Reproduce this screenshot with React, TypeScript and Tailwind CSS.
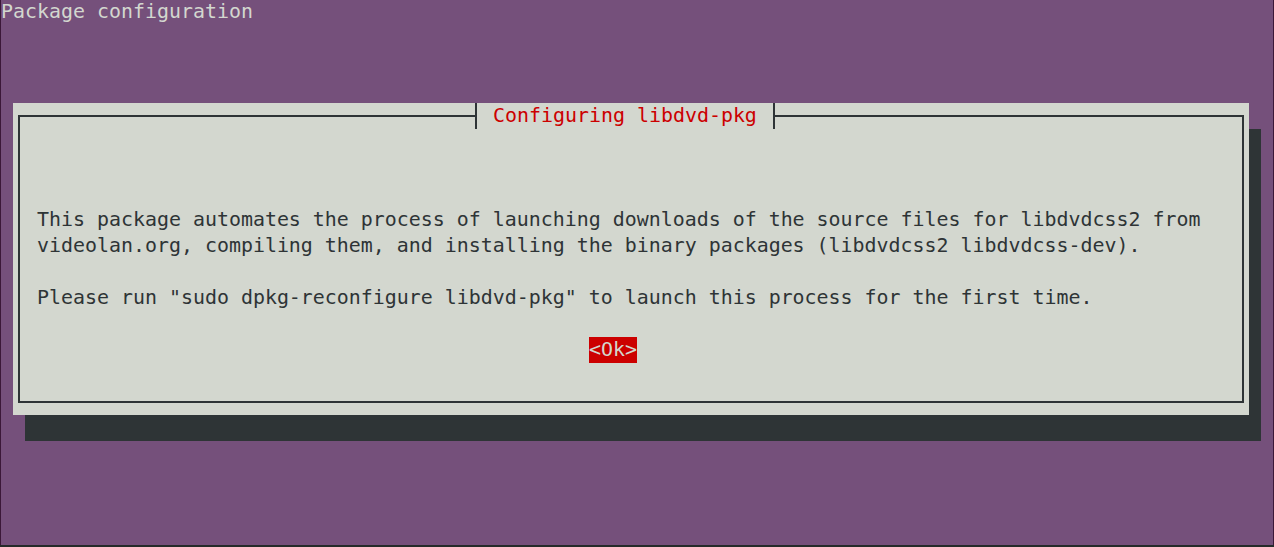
import React from "react";

const mono = { fontFamily: '"DejaVu Sans Mono", "Liberation Mono", monospace' };

export default function App() {
  return (
    <div className="w-[1274px] h-[547px] overflow-hidden bg-[#252b2a]" style={mono}>
      <div className="-mt-[1px] h-[546px] border-l border-r border-[#3b1838] bg-[#75507b] text-[19.93px] leading-[26px] whitespace-pre">
        <div className="h-[26px] text-[#d3d7cf]">Package configuration</div>
        <div className="h-[78px]" />
        <div className="ml-[12px] w-[1236px] h-[312px] relative bg-[#d3d7cf] px-[5px] py-[12px] shadow-[12px_26px_0_0_#2e3436]">
          <div className="h-[288px] border-2 border-[#2e3436] pl-[17px] pt-[12px] text-[#2e3436]">
            <div className="h-[78px]" />
            <div className="h-[26px]">This package automates the process of launching downloads of the source files for libdvdcss2 from</div>
            <div className="h-[26px]">videolan.org, compiling them, and installing the binary packages (libdvdcss2 libdvdcss-dev).</div>
            <div className="h-[26px]" />
            <div className="h-[26px]">Please run "sudo dpkg-reconfigure libdvd-pkg" to launch this process for the first time.</div>
            <div className="h-[26px]" />
            <div className="h-[26px] flex">
              <span className="ml-[552px] bg-[#cc0000] text-[#d3d7cf]">{"<Ok>"}</span>
            </div>
          </div>
          <div className="absolute top-0 left-[462px] h-[26px] border-l-2 border-r-2 border-[#2e3436] bg-[#d3d7cf] px-[16px] text-[#cc0000]">
            Configuring libdvd-pkg
          </div>
        </div>
      </div>
    </div>
  );
}
